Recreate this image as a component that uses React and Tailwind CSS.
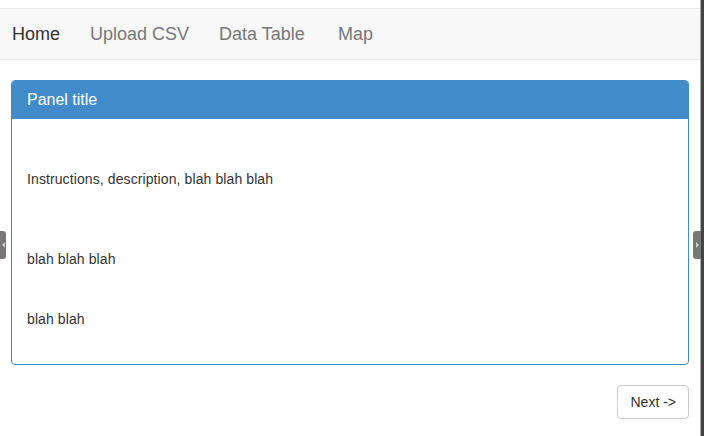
export default function App() {
  const navItems = [
    ["Home", "w-[78px] text-[#333]"],
    ["Upload CSV", "w-[129px]"],
    ["Data Table", "w-[119px]"],
    ["Map", ""],
  ];

  return (
    <div className="relative flex h-[436px] w-[704px] overflow-hidden bg-white text-[14px] text-[#333] [font-family:'Liberation_Sans',Arial,sans-serif]">
      <div className="flex w-[700px] flex-col">
        <div className="h-[8px]" />
        <nav className="flex h-[52px] items-center border-y border-[#e7e7e7] bg-[#f8f8f8] pl-[12px] text-[18px] text-[#777]">
          {navItems.map(([label, cls]) => (
            <span key={label} className={cls}>
              {label}
            </span>
          ))}
        </nav>

        <div className="px-[11px] pt-[20px]">
          <div className="overflow-hidden rounded-[4px] border border-[#428bca]">
            <div className="flex h-[38px] items-center bg-[#428bca] px-[15px] text-[16px] text-white">
              Panel title
            </div>
            <div className="px-[15px] pb-[35px] pt-[50px] leading-[20px] tracking-[0.1px]">
              <p>Instructions, description, blah blah blah</p>
              <p className="mt-[60px]">blah blah blah</p>
              <p className="mt-[40px]">blah blah</p>
            </div>
          </div>

          <div className="mt-[20px] flex justify-end">
            <button className="h-[34px] rounded-[4px] border border-[#ccc] bg-white px-[12px] text-[14px] text-[#333]">
              Next -&gt;
            </button>
          </div>
        </div>
      </div>
      <div className="w-[4px] border-l border-[#aaa] bg-[#444]" />

      <div className="absolute left-0 top-[231px] flex h-[28px] w-[6px] items-center justify-center rounded-r-[3px] bg-[#777]">
        <span className="h-0 w-0 border-y-[3px] border-r-[3px] border-y-transparent border-r-[#ccc]" />
      </div>
      <div className="absolute left-[693px] top-[231px] flex h-[28px] w-[8px] items-center justify-center rounded-l-[3px] bg-[#777]">
        <span className="h-0 w-0 border-y-[3px] border-l-[3px] border-y-transparent border-l-[#ccc]" />
      </div>
    </div>
  );
}
